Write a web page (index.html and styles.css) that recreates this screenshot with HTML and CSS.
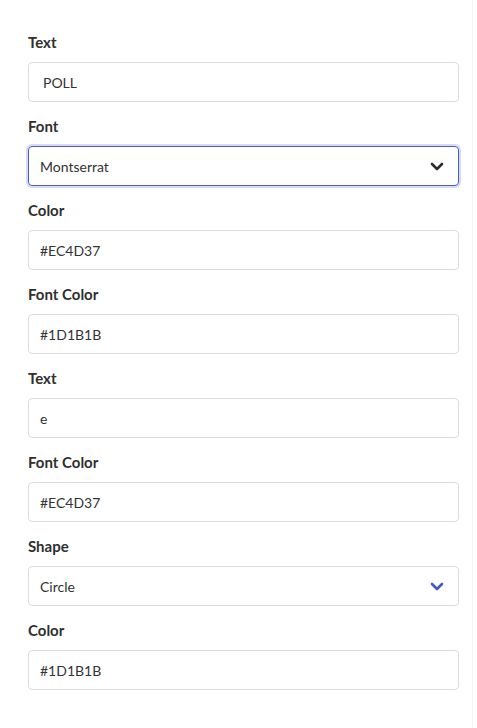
FILE: index.html
```html
<!DOCTYPE html>
<html>
<head>
<meta charset="utf-8">
<link rel="stylesheet" href="styles.css">
</head>
<body>
<div class="panel">
  <div class="field">
    <label class="label">Text</label>
    <div class="input pad-wide">POLL</div>
  </div>
  <div class="field">
    <label class="label">Font</label>
    <div class="input select focus">
      <span>Montserrat</span>
      <svg class="chev" width="14" height="9" viewBox="0 0 14 9"><path d="M2 2l5 5 5-5" fill="none" stroke="#2b2b2b" stroke-width="2.6" stroke-linecap="round" stroke-linejoin="round"/></svg>
    </div>
  </div>
  <div class="field">
    <label class="label">Color</label>
    <div class="input">#EC4D37</div>
  </div>
  <div class="field">
    <label class="label">Font Color</label>
    <div class="input">#1D1B1B</div>
  </div>
  <div class="field">
    <label class="label">Text</label>
    <div class="input">e</div>
  </div>
  <div class="field">
    <label class="label">Font Color</label>
    <div class="input">#EC4D37</div>
  </div>
  <div class="field">
    <label class="label">Shape</label>
    <div class="input select">
      <span>Circle</span>
      <svg class="chev" width="14" height="9" viewBox="0 0 14 9"><path d="M2 2l5 5 5-5" fill="none" stroke="#4656c8" stroke-width="2.6" stroke-linecap="round" stroke-linejoin="round"/></svg>
    </div>
  </div>
  <div class="field">
    <label class="label">Color</label>
    <div class="input">#1D1B1B</div>
  </div>
</div>
</body>
</html>
```
FILE: styles.css
```css
html, body {
  margin: 0;
  padding: 0;
  background: #fff;
}
body {
  font-family: "Source Sans Pro", Lato, "Noto Sans", sans-serif;
  color: #333;
}
.panel {
  width: 473px;
  box-sizing: border-box;
  padding: 32px 0 0 28px;
  min-height: 728px;
  border-right: 1px solid #f4f4f4;
}
.field {
  width: 431px;
  margin-bottom: 14px;
}
.label {
  display: block;
  font-size: 15px;
  line-height: 20px;
  font-weight: 700;
  color: #2f2f2f;
  margin-bottom: 10px;
}
.input {
  box-sizing: border-box;
  height: 40px;
  border: 1px solid #dcdcdc;
  border-radius: 4px;
  padding: 0 11px;
  display: flex;
  align-items: center;
  font-size: 14px;
  color: #333;
}
.pad-wide {
  padding-left: 14px;
}
.select {
  justify-content: space-between;
  padding-right: 14px;
}
.focus {
  border-color: #4a5bd0;
  box-shadow: 0 0 0 2px #d6daf5;
}
.chev {
  display: block;
}
```
